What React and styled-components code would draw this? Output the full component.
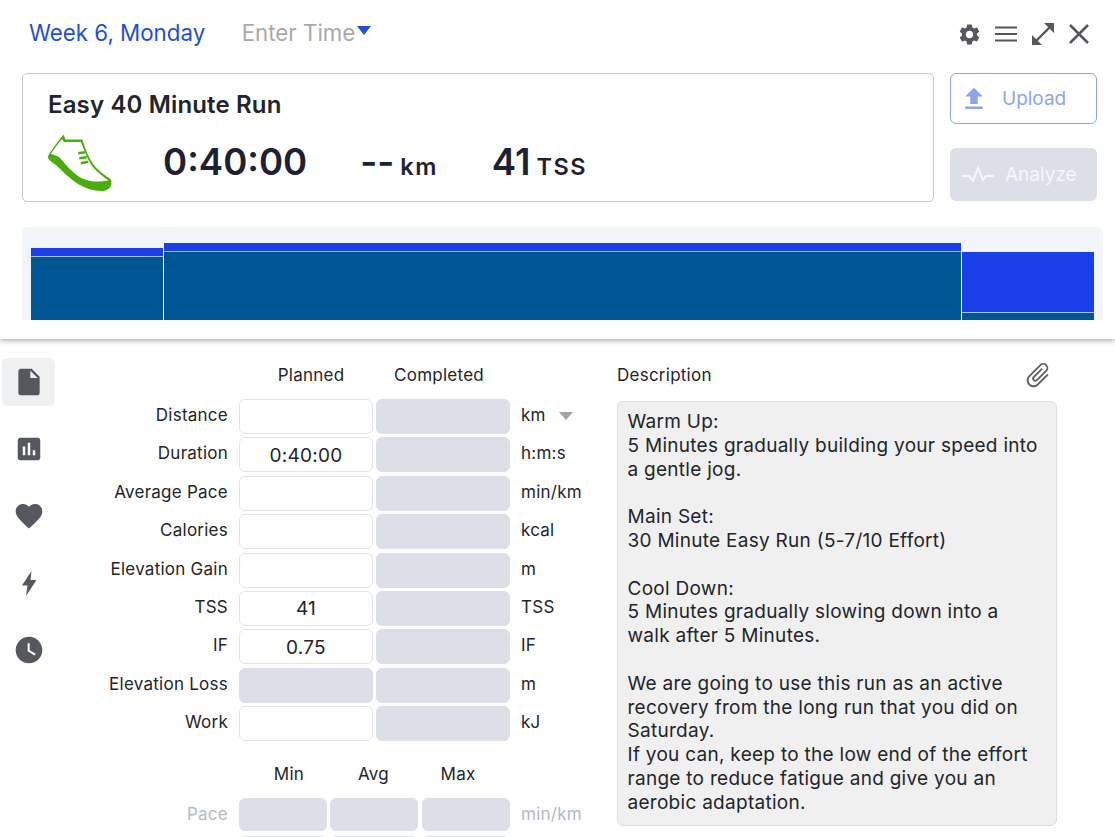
import styled, { createGlobalStyle } from "styled-components";
import {
  MdInsertDriveFile,
  MdPoll,
  MdFavorite,
  MdWatchLater,
  MdFileUpload,
  MdAttachFile,
  MdSettings,
} from "react-icons/md";

const GlobalStyle = createGlobalStyle`
  html, body {
    margin: 0;
    padding: 0;
    background: #fff;
    font-family: Inter, "Liberation Sans", sans-serif;
  }
`;

const Page = styled.div`
  width: 1115px;
  height: 837px;
  overflow: hidden;
  color: #22252b;
`;

const Header = styled.header`
  position: relative;
  height: 339px;
  box-sizing: border-box;
  padding: 0 12px 0 22px;
  background: #fff;
  box-shadow: 0 2px 5px rgba(0, 0, 0, 0.3);
`;

const TopBar = styled.div`
  height: 73px;
  display: flex;
  align-items: flex-start;
  padding-top: 19px;
  box-sizing: border-box;
`;

const WeekTitle = styled.div`
  margin-left: 7px;
  font-size: 22.3px;
  line-height: 28px;
  color: #1f4fd8;
`;

const TimePicker = styled.div`
  margin-left: 36.5px;
  font-size: 22.3px;
  line-height: 28px;
  color: #a9a9a9;
  display: flex;
`;

const Caret = styled.span`
  width: 0;
  height: 0;
  margin: ${(p) => (p.$small ? "2px 0 0 13px" : "7px 0 0 2px")};
  border-left: 7px solid transparent;
  border-right: 7px solid transparent;
  border-top: ${(p) => (p.$small ? 8 : 9)}px solid ${(p) => p.$color};
`;

const WindowTools = styled.div`
  margin-left: auto;
  margin-right: 12px;
  display: flex;
  align-items: center;
  gap: 12.5px;
  color: #55575c;
  height: 30px;
`;

const SummaryRow = styled.div`
  display: flex;
  gap: 16px;
`;

const Card = styled.div`
  width: 912px;
  height: 129px;
  box-sizing: border-box;
  padding: 16px 25px 0;
  border: 1px solid #c9c9c9;
  border-radius: 5px;
`;

const WorkoutName = styled.div`
  font-size: 24px;
  letter-spacing: 0.15px;
  line-height: 30px;
  font-weight: 600;
  color: #22252b;
`;

const Stats = styled.div`
  display: flex;
  align-items: flex-start;
  margin-top: 14px;
`;

const Stat = styled.div`
  margin-left: ${(p) => p.$gap}px;
  margin-top: 6px;
  font-size: 36.6px;
  line-height: 44px;
  font-weight: 600;
  color: #1e2230;
  white-space: nowrap;
`;

const StatUnit = styled.span`
  font-size: 23.5px;
  letter-spacing: 1.5px;
  margin-left: 6px;
`;

const ButtonColumn = styled.div`
  width: 147px;
  display: flex;
  flex-direction: column;
  gap: 24px;
`;

const UploadButton = styled.div`
  height: 51px;
  box-sizing: border-box;
  border: 1px solid #8ea3ec;
  border-radius: 6px;
  display: flex;
  align-items: center;
  padding-left: 8px;
  gap: 13px;
  color: #8ea3ec;
  font-size: 19px;
`;

const AnalyzeButton = styled.div`
  height: 53px;
  background: #dcdfe7;
  border-radius: 6px;
  display: flex;
  align-items: center;
  padding-left: 11px;
  gap: 10px;
  color: #f6f7f9;
  font-size: 19px;
`;

const Chart = styled.div`
  margin-top: 25px;
  width: 1081px;
  height: 93px;
  background: #f2f5f9;
  border-radius: 6px 6px 0 0;
  display: flex;
  align-items: flex-end;
  padding: 0 9px;
  box-sizing: border-box;
  gap: 1px;
`;

const Bar = styled.div`
  width: ${(p) => p.$width}px;
  display: flex;
  flex-direction: column;
  gap: 1px;
  background: #9fc4f2;
`;

const Planned = styled.div`
  background: #1a3fe8;
`;

const Done = styled.div`
  background: #005692;
`;

const Body = styled.main`
  display: flex;
  height: 498px;
`;

const Sidebar = styled.nav`
  width: 53px;
  margin-left: 2px;
  padding-top: 19px;
  display: flex;
  flex-direction: column;
  gap: 19px;
`;

const SideItem = styled.div`
  height: 48px;
  border-radius: 6px;
  display: flex;
  align-items: center;
  justify-content: center;
  color: #55585f;
  background: ${(p) => (p.$active ? "#eef0f2" : "transparent")};
`;

const Form = styled.section`
  width: 554px;
  margin-left: 3px;
  padding-top: 26px;
  display: flex;
  flex-direction: column;
  font-size: 17px;
  letter-spacing: 0.25px;
`;

const ColumnHeads = styled.div`
  display: flex;
  height: 20px;
  line-height: 20px;
  margin-bottom: 14px;
  margin-left: 181px;
`;

const ColumnHead = styled.div`
  width: 134px;
  margin-right: 3px;
  box-sizing: border-box;
  text-align: center;
  padding-left: ${(p) => p.$left || 0}px;
  padding-right: ${(p) => p.$right || 0}px;
`;

const MetricHeads = styled.div`
  display: flex;
  height: 20px;
  line-height: 20px;
  margin: 23px 0 14px 201px;
  gap: 24.5px;
`;

const MetricHead = styled.div`
  width: 60px;
  text-align: center;
`;

const Rows = styled.div`
  display: flex;
  flex-direction: column;
  gap: ${(p) => p.$gap}px;
`;

const Row = styled.div`
  display: flex;
  align-items: center;
  height: ${(p) => p.$height}px;
`;

const Label = styled.div`
  width: 170px;
  margin-right: 11px;
  padding-bottom: ${(p) => (p.$muted ? 1 : 3)}px;
  text-align: right;
  color: ${(p) => (p.$muted ? "#b5b9c6" : "inherit")};
`;

const Field = styled.div`
  width: ${(p) => p.$width || 134}px;
  height: 100%;
  box-sizing: border-box;
  margin-right: ${(p) => p.$right || 3}px;
  padding-top: 1px;
  border-radius: 6px;
  border: 1px solid ${(p) => (p.$filled ? "#dcdfe7" : "#e2e4e8")};
  background: ${(p) => (p.$filled ? "#dcdfe7" : "#fff")};
  display: flex;
  align-items: center;
  justify-content: center;
  font-size: 19px;
`;

const UnitLabel = styled.div`
  margin-left: 8px;
  padding-bottom: ${(p) => (p.$muted ? 1 : 3)}px;
  display: flex;
  align-items: center;
  color: ${(p) => (p.$muted ? "#b5b9c6" : "inherit")};
`;

const Description = styled.section`
  width: 440px;
  margin-left: 5px;
  padding-top: 26px;
`;

const DescriptionHead = styled.div`
  height: 20px;
  line-height: 20px;
  font-size: 17px;
  letter-spacing: 0.25px;
  display: flex;
  justify-content: space-between;
  align-items: center;
  margin-bottom: 16px;
  color: #22252b;
`;

const Clip = styled(MdAttachFile)`
  color: #606266;
  transform: rotate(45deg);
  margin-right: 4px;
`;

const DescriptionBox = styled.div`
  height: 425px;
  box-sizing: border-box;
  padding: 8px 9.5px;
  background: #f0f0f0;
  border: 1px solid #dedede;
  border-radius: 6px;
  font-size: 19px;
  letter-spacing: 0.28px;
  line-height: 23.8px;
  white-space: pre-line;
  color: #22252b;
`;

const ShoeIcon = () => (
  <svg width="65" height="60" viewBox="0 0 65 60">
    <path
      fillRule="evenodd"
      fill="#4bad0c"
      d="M15.5 0.5 L17.5 5.5 L34.5 5.5 C37 14 41 25 47 32.5 C51 37 55 40 59 42.7 C62 44 63.5 46 63.5 48 C63.5 53 61 56 55 57 C47 57.5 38 55 30 50 C20 43 14 37 8 31 C4 28 0 26 0 22.5 C0.5 20 8 10 15.5 0.5 Z M14 5 C10 10 6 15 2.8 20 C7 21 10 22 13 25 C18 31 23 37 30 42 C37 47 48 49 60 46.5 C59 45 58 44.5 57 44 C52 40 47 36 44 32 C40 26 36 16 33 8 L16 8 Z"
    />
    <path d="M30.3 19.3 L37 18.3 M31.3 24.3 L38.7 23.3 M32.7 29.3 L40.3 27.7" stroke="#4bad0c" strokeWidth="2.5" fill="none" />
  </svg>
);

const MenuIcon = () => (
  <svg width="24" height="24" viewBox="0 0 24 24">
    <path d="M1 5.5h22M1 12h22M1 18.5h22" stroke="currentColor" strokeWidth="2.2" />
  </svg>
);

const ExpandIcon = () => (
  <svg width="24" height="24" viewBox="0 0 24 24" fill="currentColor">
    <path d="M3 21 L21 3" stroke="currentColor" strokeWidth="2.4" />
    <path d="M13 1h10v10zM1 13v10h10z" />
  </svg>
);

const CloseIcon = () => (
  <svg width="24" height="24" viewBox="0 0 24 24">
    <path d="M3 3 L21 21 M21 3 L3 21" stroke="currentColor" strokeWidth="2.6" />
  </svg>
);

const PulseIcon = () => (
  <svg width="34" height="22" viewBox="0 0 34 22" fill="none">
    <path d="M1 12h7l4 5 5-13 5 12 3-4h8" stroke="#f6f7f9" strokeWidth="2" />
  </svg>
);

const BoltIcon = () => (
  <svg width="16" height="26" viewBox="0 0 16 26" fill="currentColor">
    <path d="M10.5 1 1 15.5h5.5L5 26 15.5 10H9.5z" />
  </svg>
);

const metrics = [
  { label: "Distance", unit: "km", caret: true },
  { label: "Duration", value: "0:40:00", unit: "h:m:s" },
  { label: "Average Pace", unit: "min/km" },
  { label: "Calories", unit: "kcal" },
  { label: "Elevation Gain", unit: "m" },
  { label: "TSS", value: "41", unit: "TSS" },
  { label: "IF", value: "0.75", unit: "IF" },
  { label: "Elevation Loss", unit: "m", locked: true },
  { label: "Work", unit: "kJ" },
];

const description = `Warm Up:
5 Minutes gradually building your speed into
a gentle jog.

Main Set:
30 Minute Easy Run (5-7/10 Effort)

Cool Down:
5 Minutes gradually slowing down into a
walk after 5 Minutes.

We are going to use this run as an active
recovery from the long run that you did on
Saturday.
If you can, keep to the low end of the effort
range to reduce fatigue and give you an
aerobic adaptation.`;

export default function App() {
  return (
    <Page>
      <GlobalStyle />
      <Header>
        <TopBar>
          <WeekTitle>Week 6, Monday</WeekTitle>
          <TimePicker>
            Enter Time
            <Caret $color="#1f4fd8" />
          </TimePicker>
          <WindowTools>
            <MdSettings size={25} />
            <MenuIcon />
            <ExpandIcon />
            <CloseIcon />
          </WindowTools>
        </TopBar>
        <SummaryRow>
          <Card>
            <WorkoutName>Easy 40 Minute Run</WorkoutName>
            <Stats>
              <ShoeIcon />
              <Stat $gap={50}>0:40:00</Stat>
              <Stat $gap={53}>
                --<StatUnit>km</StatUnit>
              </Stat>
              <Stat $gap={54}>
                41<StatUnit>TSS</StatUnit>
              </Stat>
            </Stats>
          </Card>
          <ButtonColumn>
            <UploadButton>
              <MdFileUpload size={30} />
              Upload
            </UploadButton>
            <AnalyzeButton>
              <PulseIcon />
              Analyze
            </AnalyzeButton>
          </ButtonColumn>
        </SummaryRow>
        <Chart>
          <Bar $width={132}>
            <Planned style={{ height: 8 }} />
            <Done style={{ height: 63 }} />
          </Bar>
          <Bar $width={797}>
            <Planned style={{ height: 8 }} />
            <Done style={{ height: 68 }} />
          </Bar>
          <Bar $width={132}>
            <Planned style={{ height: 60 }} />
            <Done style={{ height: 7 }} />
          </Bar>
        </Chart>
      </Header>
      <Body>
        <Sidebar>
          <SideItem $active>
            <MdInsertDriveFile size={32} />
          </SideItem>
          <SideItem>
            <MdPoll size={30} />
          </SideItem>
          <SideItem>
            <MdFavorite size={32} />
          </SideItem>
          <SideItem>
            <BoltIcon />
          </SideItem>
          <SideItem>
            <MdWatchLater size={32} />
          </SideItem>
        </Sidebar>
        <Form>
          <ColumnHeads>
            <ColumnHead $left={10}>Planned</ColumnHead>
            <ColumnHead $right={8}>Completed</ColumnHead>
          </ColumnHeads>
          <Rows $gap={3.4}>
            {metrics.map((m) => (
              <Row key={m.label} $height={35}>
                <Label>{m.label}</Label>
                <Field $filled={m.locked}>{m.value}</Field>
                <Field $filled />
                <UnitLabel>
                  {m.unit}
                  {m.caret && <Caret $color="#a3a3a3" $small />}
                </UnitLabel>
              </Row>
            ))}
          </Rows>
          <MetricHeads>
            <MetricHead>Min</MetricHead>
            <MetricHead>Avg</MetricHead>
            <MetricHead>Max</MetricHead>
          </MetricHeads>
          <Rows $gap={5}>
            <Row $height={33}>
              <Label $muted>Pace</Label>
              <Field $filled $width={88} />
              <Field $filled $width={88} $right={4} />
              <Field $filled $width={88} />
              <UnitLabel $muted>min/km</UnitLabel>
            </Row>
            <Row $height={33}>
              <Label />
              <Field $filled $width={88} />
              <Field $filled $width={88} $right={4} />
              <Field $filled $width={88} />
            </Row>
          </Rows>
        </Form>
        <Description>
          <DescriptionHead>
            Description
            <Clip size={30} />
          </DescriptionHead>
          <DescriptionBox>{description}</DescriptionBox>
        </Description>
      </Body>
    </Page>
  );
}
